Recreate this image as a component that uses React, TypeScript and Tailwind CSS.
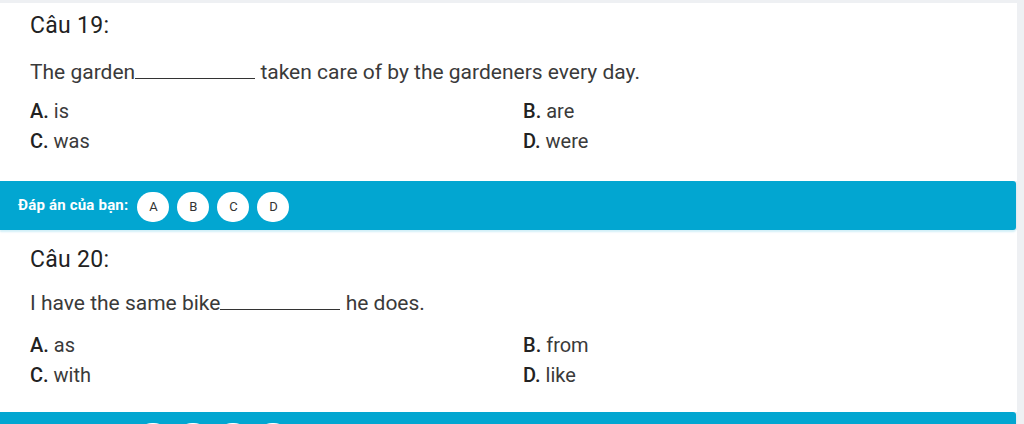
import React from "react";

type Question = {
  no: number;
  before: string;
  after: string;
  options: { key: string; text: string }[];
  pt: string;
  qMt: string;
  oMt: string;
  pb: string;
};

const questions: Question[] = [
  {
    no: 19,
    before: "The garden",
    after: "taken care of by the gardeners every day.",
    options: [
      { key: "A", text: "is" },
      { key: "B", text: "are" },
      { key: "C", text: "was" },
      { key: "D", text: "were" },
    ],
    pt: "pt-[10px]",
    qMt: "mt-[21px]",
    oMt: "mt-[12px]",
    pb: "pb-[25px]",
  },
  {
    no: 20,
    before: "I have the same bike",
    after: "he does.",
    options: [
      { key: "A", text: "as" },
      { key: "B", text: "from" },
      { key: "C", text: "with" },
      { key: "D", text: "like" },
    ],
    pt: "pt-[17px]",
    qMt: "mt-[18px]",
    oMt: "mt-[15px]",
    pb: "pb-[22px]",
  },
];

function QuestionCard({ q }: { q: Question }) {
  return (
    <div className={`bg-white pl-[30px] pr-4 ${q.pt} ${q.pb}`}>
      <div className="text-[23px] leading-[26px] text-[#222] tracking-[0.3px]">Câu {q.no}:</div>
      <div className={`${q.qMt} text-[21px] leading-[24px] text-[#3a3a3a]`}>
        {q.before}
        <span className="inline-block w-[120px] border-b border-[#333]" /> {q.after}
      </div>
      <div className={`${q.oMt} grid grid-cols-[493px_1fr] text-[20px] leading-[30px] text-[#3a3a3a]`}>
        {q.options.map((o) => (
          <div key={o.key}>
            <span className="font-medium text-[#222]">{o.key}.</span> {o.text}
          </div>
        ))}
      </div>
    </div>
  );
}

function AnswerBar() {
  return (
    <div className="h-[49px] bg-[#02a6d1] rounded-r-[3px] shadow-[0_2px_2px_rgba(2,166,209,0.18)] flex items-center pl-[18px] relative z-10">
      <span className="text-white font-bold text-[15px] tracking-[0.2px]">Đáp án của bạn:</span>
      <div className="flex gap-[8px] ml-[9px] mt-[3px]">
        {["A", "B", "C", "D"].map((l) => (
          <div
            key={l}
            className="w-[32px] h-[30px] rounded-full bg-white flex items-center justify-center text-[13px] text-[#333]"
          >
            {l}
          </div>
        ))}
      </div>
    </div>
  );
}

export default function App() {
  return (
    <div
      className="h-[424px] w-[1024px] overflow-hidden bg-[#eef0f3] pt-[3px]"
      style={{ fontFamily: "Roboto, 'Noto Sans', sans-serif" }}
    >
      <div className="w-[1017px]">
        {questions.map((q) => (
          <div key={q.no}>
            <QuestionCard q={q} />
            <div className="w-[1016px]">
              <AnswerBar />
            </div>
          </div>
        ))}
      </div>
    </div>
  );
}
